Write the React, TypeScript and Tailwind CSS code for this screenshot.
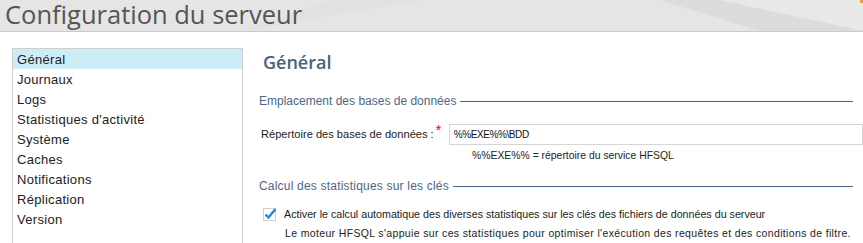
import React from "react";

const items = [
  "Général",
  "Journaux",
  "Logs",
  "Statistiques d'activité",
  "Système",
  "Caches",
  "Notifications",
  "Réplication",
  "Version",
];

export default function App() {
  return (
    <div className="w-[863px] h-[243px] overflow-hidden bg-white text-[#222]" style={{ fontFamily: '"Liberation Sans", Arial, sans-serif' }}>
      <div className="relative h-[32px] bg-[#e5e5e5] border-b border-[#f2d43a]">
        <svg className="absolute inset-0" width="863" height="31" viewBox="0 0 863 31">
          <polygon points="660,0 863,0 863,31 760,31" fill="#dcdcdc" />
          <polygon points="720,0 863,0 863,31" fill="#e8e8e8" />
          <polygon points="240,31 330,0 420,0" fill="#e1e1e1" />
          <rect x="860" y="0" width="3" height="3" fill="#f0a040" />
        </svg>
        <div className="relative pl-[5px] pt-[1px] text-[25.5px] leading-[26px] text-[#555]" style={{ fontFamily: '"Open Sans", sans-serif' }}>Configuration du serveur</div>
      </div>
      <div className="flex pt-[16px]">
        <div className="ml-[12px] w-[231px] h-[200px] border border-b-0 border-[#cfcfcf] pt-0">
          {items.map((it, i) => (
            <div key={it} className={`h-[20px] leading-[21px] pl-[4px] text-[13px] tracking-[0.3px] ${i === 0 ? "bg-[#cdedf6]" : ""}`}>{it}</div>
          ))}
        </div>
        <div className="flex-1 pl-[16px] pr-[10px]">
          <div className="pl-[4px] pt-[2px] text-[18px] leading-[24px] font-semibold text-[#4b617c]" style={{ fontFamily: '"Open Sans", sans-serif' }}>Général</div>
          <div className="flex items-center mt-[19px] h-[16px] text-[12px] text-[#4f6684]">
            <span>Emplacement des bases de données</span>
            <div className="flex-1 ml-[4px] h-px bg-[#4d6585]" />
          </div>
          <div className="flex items-center mt-[15px] h-[21px] mr-[-10px]">
            <span className="pl-[2px] text-[11.1px]">Répertoire des bases de données :</span>
            <span className="w-[15px] pl-[2px] self-start text-[14px] leading-[12px] text-[#e00]">*</span>
            <div className="flex-1 h-[21px] border border-[#d6d6d6] pl-[4px] text-[10px] tracking-[-0.4px] leading-[19px] text-[#111]">%%EXE%%\BDD</div>
          </div>
          <div className="pl-[213px] mt-[4px] text-[10.4px] leading-[14px]">%%EXE%% = répertoire du service HFSQL</div>
          <div className="flex items-center mt-[15px] h-[16px] text-[12px] tracking-[0.2px] text-[#4f6684]">
            <span>Calcul des statistiques sur les clés</span>
            <div className="flex-1 ml-[4px] h-px bg-[#4d6585]" />
          </div>
          <div className="flex items-center mt-[12px] pl-[4px] h-[16px]">
            <svg width="14" height="14" viewBox="0 0 14 14">
              <rect x="0.5" y="1.5" width="12" height="12" fill="#fff" stroke="#cfcfcf" />
              <path d="M2.5 7.5 L5.5 10.5 L12.5 2" stroke="#2a86d6" strokeWidth="2.4" fill="none" />
            </svg>
            <span className="ml-[7px] text-[10.7px]">Activer le calcul automatique des diverses statistiques sur les clés des fichiers de données du serveur</span>
          </div>
          <div className="pl-[26px] mt-[3px] text-[10.5px] leading-[16px] tracking-[0.35px] whitespace-nowrap">
            Le moteur HFSQL s'appuie sur ces statistiques pour optimiser l'exécution des requêtes et des conditions de filtre.
          </div>
        </div>
      </div>
    </div>
  );
}
